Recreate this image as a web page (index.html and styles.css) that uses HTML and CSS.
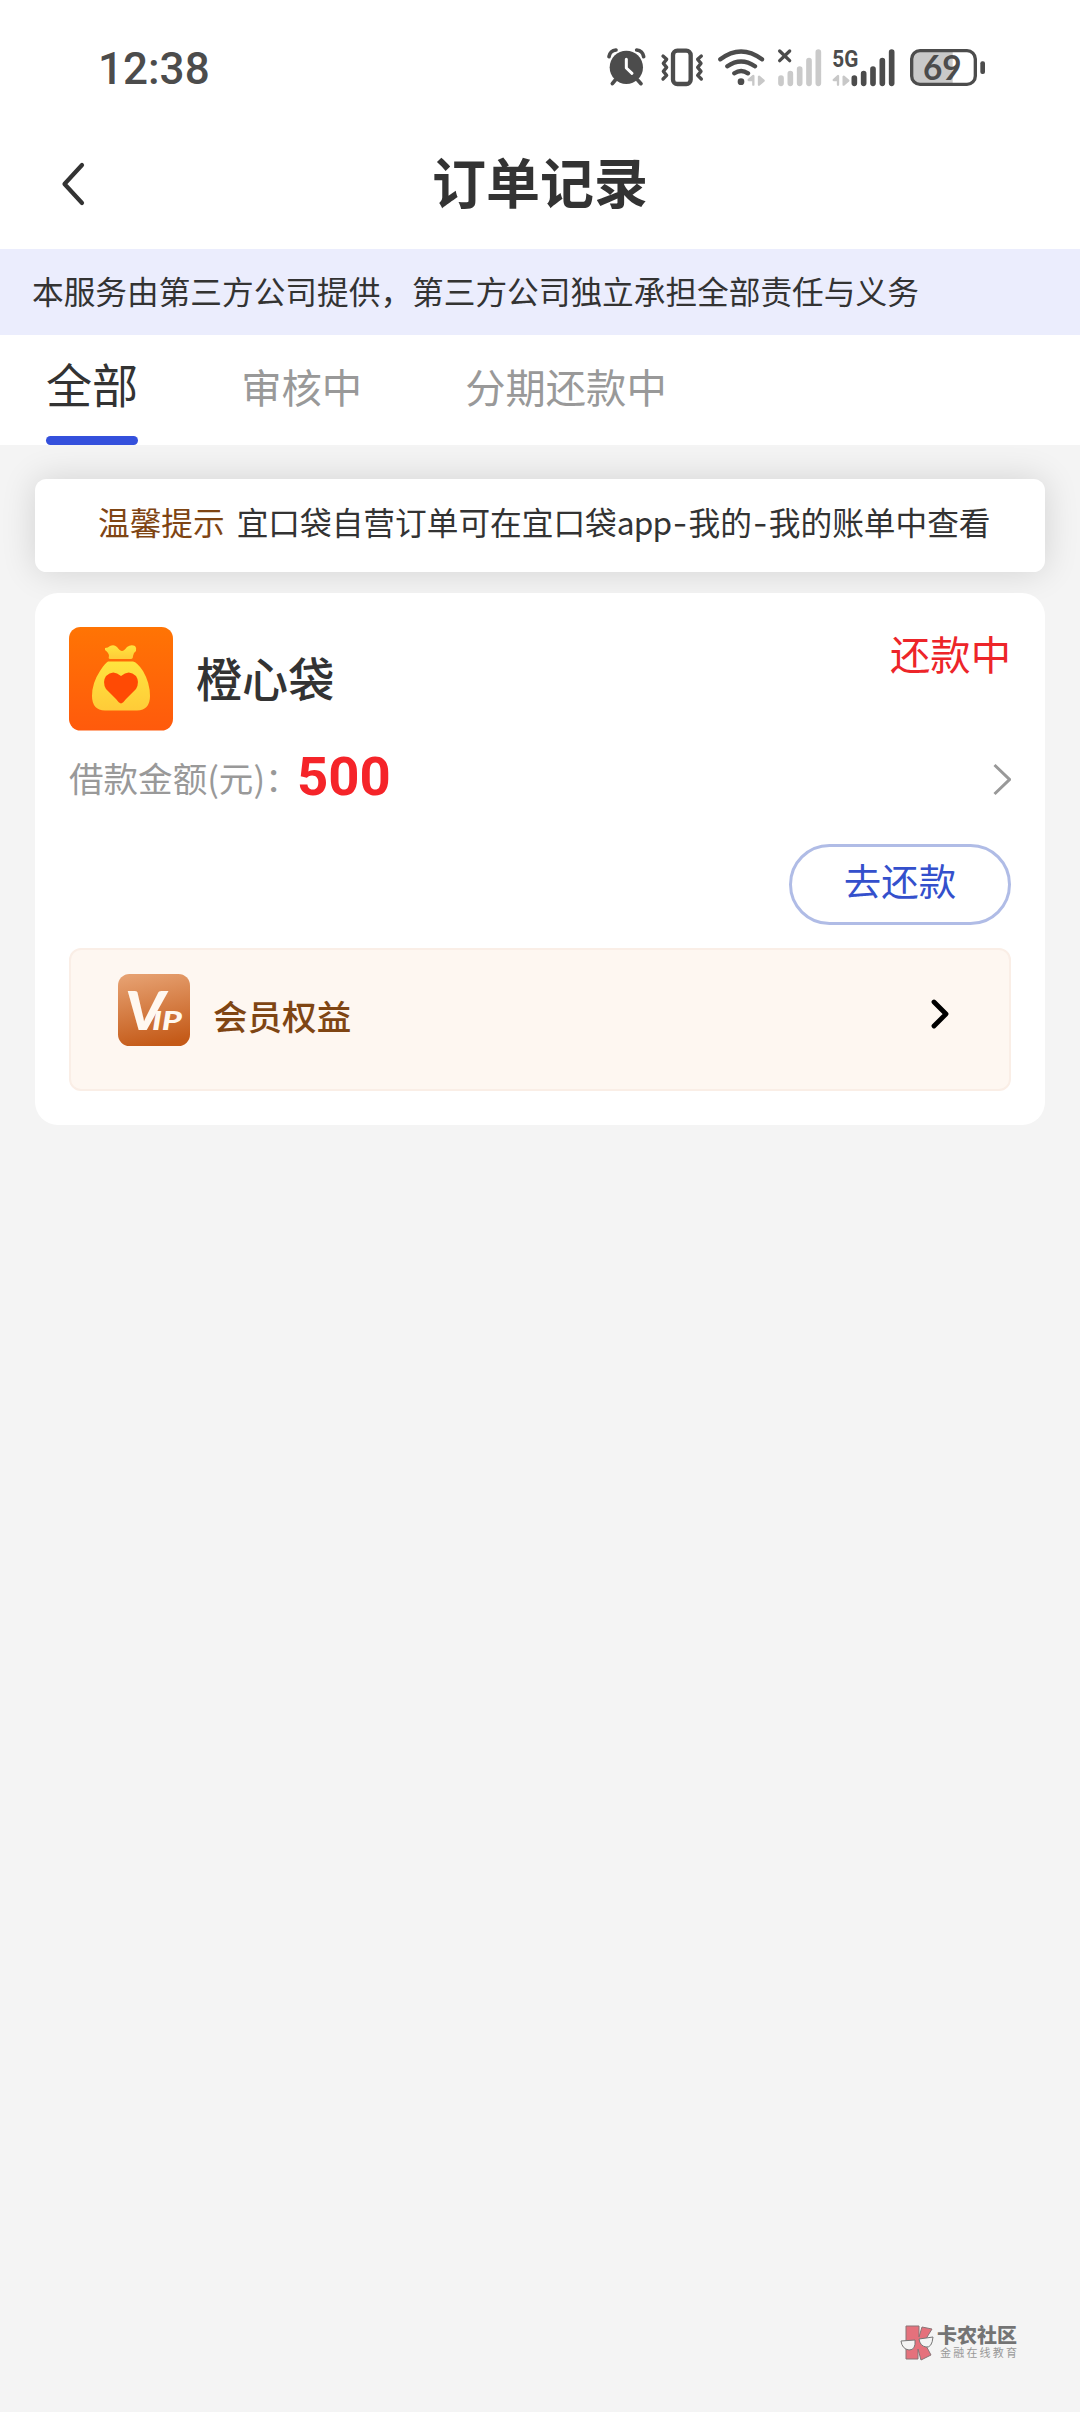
FILE: index.html
```html
<!DOCTYPE html>
<html lang="zh-CN">
<head>
<meta charset="utf-8">
<title>订单记录</title>
<link rel="stylesheet" href="styles.css">
</head>
<body>
<div class="screen">
  <header class="top">
    <div class="status">
      <span class="clock">12:38</span>
      <svg class="status-icons" width="400" height="45" viewBox="45 45 1200 135" fill="none" stroke="#4c4c4c" stroke-linecap="round" stroke-linejoin="round">
        <g>
          <circle cx="109" cy="112" r="50" fill="#4c4c4c" stroke="none"/>
          <path d="M57 80Q60 62 78 60M161 80Q158 62 140 60" stroke-width="11"/>
          <path d="M76 150L67 161M143 150L153 161" stroke-width="11"/>
          <path d="M109 88V114L126 130" stroke="#fff" stroke-width="9"/>
        </g>
        <g>
          <rect x="249" y="62" width="53" height="100" rx="13" stroke-width="13"/>
          <path d="M219 78L230 88L220 100L230 112L220 124L230 136L219 147M334 78L323 88L333 100L323 112L333 124L323 136L334 147" stroke-width="10"/>
        </g>
        <g>
          <path d="M391 88Q453 41 516 88M412 109Q453 80 495 109M433 130Q453 116 474 130" stroke-width="13"/>
          <circle cx="453" cy="155" r="10" fill="#4c4c4c" stroke="none"/>
          <path d="M476 150L490 138V164V150ZM507 140V164L521 152Z" fill="#c8c8c8" stroke="#c8c8c8" stroke-width="7"/>
        </g>
        <g>
          <path d="M569 63L599 92M599 63L569 92" stroke-width="10"/>
          <path d="M573 144V160M601 131V160M629 117V160M657 92V160M685 66V160" stroke="#cacaca" stroke-width="17"/>
        </g>
        <g>
          <text class="net" x="727" y="111" textLength="78" lengthAdjust="spacingAndGlyphs">5G</text>
          <path d="M731 150L744 138V164V150ZM761 140V164L775 152Z" fill="#c8c8c8" stroke="#c8c8c8" stroke-width="7"/>
          <path d="M793 144V160M821 131V160M849 117V160M877 92V160M905 66V160" stroke-width="17"/>
        </g>
        <g>
          <path d="M988 63H1088V163H988Q965 160 965 140V80Q965 66 988 63Z" fill="#c9c9c9" stroke="none"/>
          <rect x="965" y="62" width="191" height="101" rx="25" stroke-width="10"/>
          <rect x="1171" y="94" width="14" height="38" rx="6" fill="#4c4c4c" stroke="none"/>
          <text class="battery" x="999" y="149" textLength="116" lengthAdjust="spacingAndGlyphs">69</text>
        </g>
      </svg>
    </div>
    <div class="nav">
      <svg class="back" width="26" height="46" viewBox="0 0 26 46"><path d="M22 4L4.500 23L22 42" fill="none" stroke="#333" stroke-width="4.200" stroke-linecap="round" stroke-linejoin="round"/></svg>
      <h1 class="title">订单记录</h1>
    </div>
  </header>
  <p class="notice">本服务由第三方公司提供，第三方公司独立承担全部责任与义务</p>
  <nav class="tabs">
    <span class="tab active">全部</span>
    <span class="tab">审核中</span>
    <span class="tab">分期还款中</span>
  </nav>
  <main class="content">
    <p class="tip"><span class="tip-label">温馨提示</span><span>宜口袋自营订单可在宜口袋<span class="latin">app</span><span class="dash">-</span>我的<span class="dash">-</span>我的账单中查看</span></p>
    <section class="order">
      <div class="order-head">
        <svg class="logo" width="104" height="104" viewBox="0 0 104 104">
          <defs>
            <linearGradient id="orange" x1="0" y1="0" x2="0" y2="1"><stop offset="0" stop-color="#ff7404"/><stop offset="1" stop-color="#ff5a0c"/></linearGradient>
            <linearGradient id="gold" x1="0" y1="0" x2="0" y2="1"><stop offset="0" stop-color="#ffe43e"/><stop offset="1" stop-color="#ffcb38"/></linearGradient>
          </defs>
          <rect width="104" height="103.500" rx="11.500" fill="url(#orange)"/>
          <path d="M36 21Q39 21 41 19Q45 17 48 20Q51 24 53 24Q55 24 58 20Q62 17 66 19Q68 21 67 24Q64 26 64 29Q64 32 62 32H41Q39 32 40 29Q40 26 36 23Z" fill="url(#gold)"/>
          <path d="M39 34.500H64Q68 35 74 44Q81 56 81 69Q81 83 68 83.500H36Q23 83 23 69Q23 56 31 44Q36 36 39 34.500Z" fill="url(#gold)"/>
          <path d="M52 76.500Q50 76 47 72L37 62Q33 55 37 49Q44 42 52 49Q60 42 67 49Q71 55 67 62L57 72Q54 76 52 76.500Z" fill="#ff4a04"/>
        </svg>
        <h2 class="name">橙心袋</h2>
        <span class="state">还款中</span>
      </div>
      <div class="amount">
        <span class="amount-label">借款金额(元)：</span><strong class="amount-value">500</strong>
        <svg class="more" width="20" height="34" viewBox="0 0 20 34"><path d="M3.500 3L18.500 17.500L3.500 32" fill="none" stroke="#999" stroke-width="3"/></svg>
      </div>
      <div class="actions"><button class="repay">去还款</button></div>
      <div class="vip">
        <svg width="72" height="72" viewBox="0 0 72 72">
          <defs><linearGradient id="bronze" x1=".3" y1="0" x2=".5" y2="1"><stop offset="0" stop-color="#e6a070"/><stop offset="1" stop-color="#c45a18"/></linearGradient></defs>
          <rect width="72" height="72" rx="11.500" fill="url(#bronze)"/>
          <text class="vip-v" x="7" y="55.500" textLength="40" lengthAdjust="spacingAndGlyphs">V</text>
          <text class="vip-ip" x="34" y="55.500" textLength="30" lengthAdjust="spacingAndGlyphs">IP</text>
        </svg>
        <span class="vip-text">会员权益</span>
        <svg class="vip-more" width="20" height="32" viewBox="0 0 20 32"><path d="M4 4L16 16L4 28" fill="none" stroke="#000" stroke-width="4.800" stroke-linecap="round" stroke-linejoin="round"/></svg>
      </div>
    </section>
  </main>
  <footer class="brand">
    <svg width="34" height="36" viewBox="0 0 34 36">
      <path d="M6 1H19V12L22 2L32 4L24 17L31 30L21 35L18 24V34H6Z" fill="#e5717c" stroke="#8a7577"/>
      <path d="M1 16L15 15Q16 25 9 25Q2 24 1 16ZM19 14L33 12Q32 23 26 22Q20 21 19 14Z" fill="#f4f4f4" stroke="#777"/>
    </svg>
    <div class="brand-text"><span class="brand-name">卡农社区</span><span class="brand-sub">金融在线教育</span></div>
  </footer>
</div>
</body>
</html>
```
FILE: styles.css
```css
* { box-sizing: border-box; }
body, h1, h2, p { margin: 0; }
body { background: #f4f4f4; color: #333; font-family: "Noto Sans CJK SC", sans-serif; }
.screen { width: 1080px; height: 2412px; display: flex; flex-direction: column; }
.top { height: 249px; background: #fff; }
.status { height: 134px; padding: 0 75px 0 98px; display: flex; align-items: center; justify-content: space-between; }
.clock { padding-top: 3px; font: 500 44px/1 Roboto, sans-serif; color: #4c4c4c; }
.status-icons { flex: none; }
.net { font: 700 73px Roboto, sans-serif; fill: #4c4c4c; stroke: none; }
.battery { font: 700 104px Lato, sans-serif; fill: #4c4c4c; stroke: none; }
.nav { height: 100px; padding: 0 60px; display: grid; grid-template-columns: 26px 1fr 26px; align-items: center; }
.title { padding-bottom: 6px; font-size: 54px; line-height: 74px; font-weight: 700; text-align: center; }
.notice { height: 86px; padding-left: 32px; background: #ebedfd; font-size: 31.68px; line-height: 83px; white-space: nowrap; }
.tabs { height: 110px; padding-left: 46px; display: flex; gap: 103px; background: #fff; }
.tab { font-size: 40.32px; line-height: 102px; color: #999; }
.tab.active { display: flex; flex-direction: column; font-size: 46.08px; line-height: 97px; color: #333; }
.tab.active::after { content: ""; height: 9px; margin-top: auto; border-radius: 5px; background: #3450dc; }
.content { padding: 34px 35px 0; display: flex; flex-direction: column; gap: 21px; }
.tip { height: 93px; padding-left: 63px; display: flex; gap: 12px; border-radius: 11.5px; background: #fff; box-shadow: 0 0 35px rgba(0, 0, 0, .14); font-size: 31.68px; line-height: 85px; white-space: nowrap; }
.tip-label { color: #7f4513; }
.latin { letter-spacing: -.8px; }
.dash { display: inline-block; width: 17px; font-family: Inter, sans-serif; text-align: center; }
.order { height: 532px; padding: 34px 34px 35px; border-radius: 23px; background: #fff; }
.order-head { display: flex; align-items: center; height: 104px; }
.name { margin-left: 23px; padding-bottom: 4px; font-size: 46.08px; line-height: 96px; font-weight: 500; }
.state { align-self: flex-start; margin-left: auto; font-size: 40.32px; line-height: 51px; color: #ed2529; }
.amount { height: 95px; padding-bottom: 4px; display: flex; align-items: center; }
.amount-label { width: 220px; white-space: nowrap; font-size: 34.56px; color: #999; }
.amount-value { margin-left: 8px; font: 700 54.5px/1 Roboto, sans-serif; color: #f52429; }
.more { margin: 5px 0 0 auto; }
.actions { display: flex; justify-content: flex-end; padding-top: 18px; }
.repay { width: 222px; height: 81px; padding: 0 0 7px; border: 3px solid #b0bce6; border-radius: 41px; background: #fff; color: #3450cc; font: 37.44px/1 "Noto Sans CJK SC", sans-serif; }
.vip { height: 143px; margin-top: 23px; padding: 24px 59px 0 47px; display: flex; align-items: flex-start; border: 2px solid #faeee6; border-radius: 12px; background: #fef7f1; }
.vip-v { font: italic 900 53px Lato, sans-serif; fill: #fff8f0; }
.vip-ip { font: italic 900 27px Lato, sans-serif; fill: #fff8f0; }
.vip-text { margin-left: 23px; font-size: 34.56px; line-height: 83px; font-weight: 500; color: #7f4513; }
.vip-more { margin: 24px 0 0 auto; }
.brand { margin-top: auto; padding: 0 60px 51px; display: flex; justify-content: flex-end; gap: 3px; }
.brand-text { width: 83px; display: flex; flex-direction: column; }
.brand-name { font-size: 20px; line-height: 20px; font-weight: 900; color: #747474; }
.brand-sub { padding-left: 3px; font-size: 11px; line-height: 15px; letter-spacing: 2.2px; white-space: nowrap; color: #999; }
```
